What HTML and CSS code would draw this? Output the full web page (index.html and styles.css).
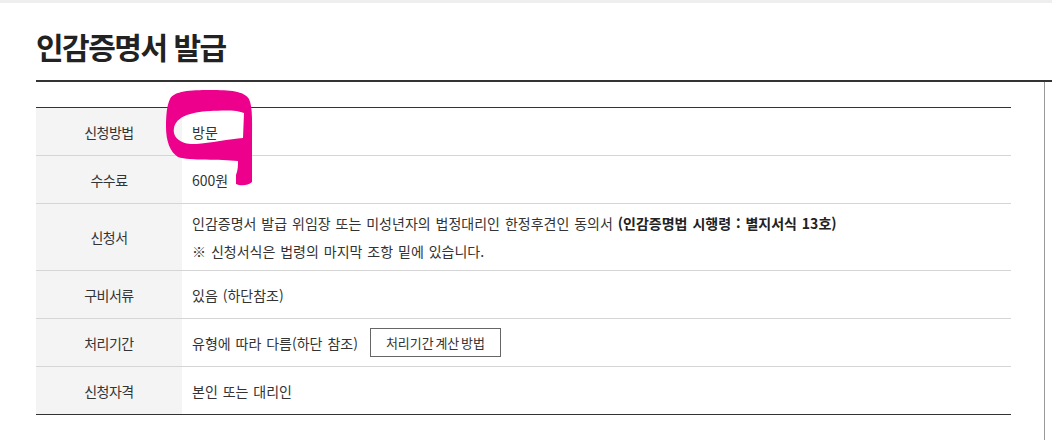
FILE: index.html
```html
<!DOCTYPE html>
<html lang="ko">
<head>
<meta charset="utf-8">
<title>인감증명서 발급</title>
<link rel="stylesheet" href="styles.css">
</head>
<body>
<div class="topbar"></div>
<div class="page">
  <h1 class="title">인감증명서 발급</h1>
  <div class="content">
    <div class="info">
      <div class="row">
        <div class="th">신청방법</div>
        <div class="td">방문</div>
      </div>
      <div class="row">
        <div class="th">수수료</div>
        <div class="td">600원</div>
      </div>
      <div class="row">
        <div class="th">신청서</div>
        <div class="td td-multi">
          <p class="line">인감증명서 발급 위임장 또는 미성년자의 법정대리인 한정후견인 동의서 <strong>(인감증명법 시행령 : 별지서식 13호)</strong></p>
          <p class="line">※ 신청서식은 법령의 마지막 조항 밑에 있습니다.</p>
        </div>
      </div>
      <div class="row">
        <div class="th">구비서류</div>
        <div class="td">있음 (하단참조)</div>
      </div>
      <div class="row">
        <div class="th">처리기간</div>
        <div class="td">유형에 따라 다름(하단 참조)<button class="btn" type="button">처리기간 계산 방법</button></div>
      </div>
      <div class="row row-last">
        <div class="th">신청자격</div>
        <div class="td">본인 또는 대리인</div>
      </div>
    </div>
  </div>
</div>
<svg class="mark" width="110" height="110" viewBox="0 0 110 110" aria-hidden="true">
  <path fill="#ec008c" fill-rule="evenodd" d="M 10 14 C 14 6, 30 5, 50 5 C 70 5, 84 6, 89 14 C 93 22, 92 40, 92 60 L 92 97 C 88 101, 80 101, 76 99 L 76 90 C 78 85, 78 80, 78 76 C 60 74, 30 76, 18 72 C 10 67, 6 56, 6 42 C 6 30, 7 20, 10 14 Z M 14 43 C 16 32, 30 27, 50 26 C 65 25, 78 25, 84 28 L 83 53 C 70 54, 50 58, 36 59 C 22 60, 12 53, 14 43 Z"/>
</svg>
</body>
</html>
```
FILE: styles.css
```css
html, body {
  margin: 0;
  padding: 0;
  background: #fff;
}
body {
  position: relative;
  width: 1052px;
  height: 440px;
  overflow: hidden;
  font-family: "Noto Sans CJK KR", "Noto Sans", sans-serif;
  color: #333;
}
.topbar {
  height: 3px;
  background: #eeeeee;
}
.page {
  padding-left: 36px;
}
.title {
  margin: 0;
  padding: 22px 0 12px;
  line-height: 43px;
  font-size: 30px;
  font-weight: 700;
  letter-spacing: -1.5px;
  color: #222;
  border-bottom: 2px solid #333;
}
.content {
  width: 1008px;
  height: 333px;
  padding-top: 25px;
  border-right: 1px solid #999;
}
.info {
  width: 975px;
  border-top: 1px solid #333;
  font-size: 14px;
  word-spacing: 1px;
}
.row {
  display: grid;
  grid-template-columns: 146px 1fr;
  border-bottom: 1px solid #d5d5d5;
}
.row-last {
  border-bottom: 1px solid #333;
}
.th,
.td {
  box-sizing: border-box;
  min-height: 47px;
  padding: 5px 10px;
  line-height: 28px;
  display: flex;
  align-items: center;
}
.th {
  background: #f4f4f4;
  justify-content: center;
  letter-spacing: -0.5px;
}
.td-multi {
  flex-direction: column;
  align-items: flex-start;
  justify-content: center;
}
.line {
  margin: 0;
}
.line strong {
  font-weight: 700;
  color: #222;
}
.btn {
  margin-left: 12px;
  height: 29px;
  padding: 0 15px;
  border: 1px solid #666;
  background: #fff;
  font-family: inherit;
  font-size: 13px;
  word-spacing: -2px;
  color: #333;
  line-height: 27px;
  cursor: pointer;
}
.mark {
  position: absolute;
  left: 160px;
  top: 85px;
}
```
